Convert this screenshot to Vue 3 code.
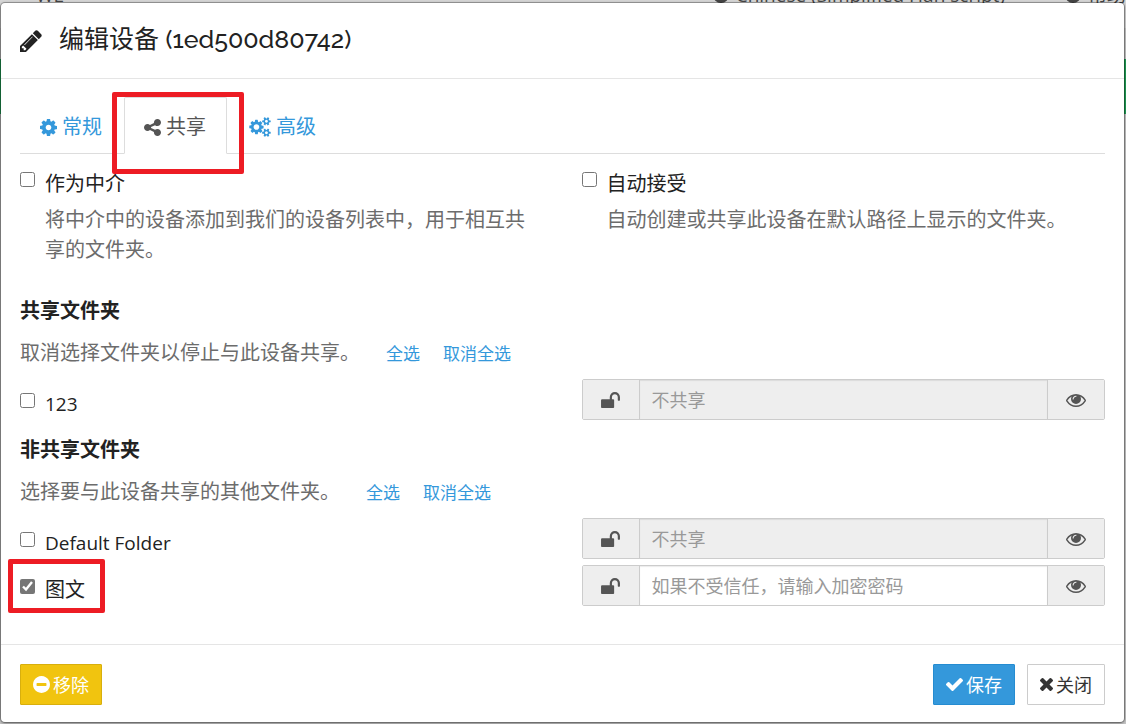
<script setup>
import { ref, h } from 'vue'

const icons = {
  pencil: ['128 128 1536 1536', 'M491 1536l91-91-235-235-91 91v107h128v128h107zm523-928q0-22-22-22-10 0-17 7l-542 542q-7 7-7 17 0 22 22 22 10 0 17-7l542-542q7-7 7-17zm-54-192l416 416-832 832h-416v-416zm683 96q0 53-37 90l-166 166-416-416 166-165q36-38 90-38 53 0 91 38l235 234q37 39 37 91z'],
  cog: ['128 128 1536 1536', 'M1152 896q0-106-75-181t-181-75-181 75-75 181 75 181 181 75 181-75 75-181zm512-109v222q0 12-8 23t-20 13l-185 28q-19 54-39 91 35 50 107 138 10 12 10 25t-9 23q-27 37-99 108t-94 71q-12 0-26-9l-138-108q-44 23-91 38-16 136-29 186-7 28-36 28h-222q-14 0-24.5-8.5t-11.5-21.5l-28-184q-49-16-90-37l-141 107q-10 9-25 9-14 0-25-11-126-114-165-168-7-10-7-23 0-12 8-23 15-21 51-66.500t54-70.500q-27-50-41-99l-183-27q-13-2-21-12.500t-8-23.500v-222q0-12 8-23t19-13l186-28q14-46 39-92-40-57-107-138-10-12-10-24 0-10 9-23 26-36 98.500-107.500t94.500-71.500q13 0 26 10l138 107q44-23 91-38 16-136 29-186 7-28 36-28h222q14 0 24.500 8.500t11.500 21.500l28 184q49 16 90 37l142-107q9-9 24-9 13 0 25 10 129 119 165 170 7 8 7 22 0 12-8 23-15 21-51 66.500t-54 70.500q26 50 41 98l183 28q13 2 21 12.500t8 23.500z'],
  cogs: ['-64 0 1920 1792', 'M832 896q0-106-75-181t-181-75-181 75-75 181 75 181 181 75 181-75 75-181zm768 512q0-52-38-90t-90-38-90 38-38 90q0 53 37.500 90.500t90.500 37.500 90.500-37.500 37.500-90.500zm0-1024q0-52-38-90t-90-38-90 38-38 90q0 53 37.500 90.500t90.500 37.500 90.500-37.500 37.500-90.500zm-384 421v185q0 10-7 19.500t-16 10.500l-155 24q-11 35-32 76 34 48 90 115 7 11 7 20 0 12-7 19-23 30-82.500 89.500t-78.500 59.500q-11 0-21-7l-115-90q-37 19-77 31-11 108-23 155-7 24-30 24h-186q-11 0-20-7.500t-10-17.500l-23-153q-34-10-75-31l-118 89q-7 7-20 7-11 0-21-8-144-133-144-160 0-9 7-19 10-14 41-53t47-61q-23-44-35-82l-152-24q-10-1-17-9.500t-7-19.500v-185q0-10 7-19.500t16-10.500l155-24q11-35 32-76-34-48-90-115-7-11-7-20 0-12 7-20 22-30 82-89t79-59q11 0 21 7l115 90q34-18 77-32 11-108 23-154 7-24 30-24h186q11 0 20 7.500t10 17.500l23 153q34 10 75 31l118-89q8-7 20-7 11 0 21 8 144 133 144 160 0 9-7 19-12 16-42 54t-45 60q23 48 34 82l152 23q10 2 17 10.500t7 19.500zm640 533v140q0 16-149 31-12 27-30 52 51 113 51 138 0 4-4 7-122 71-124 71-8 0-46-47t-52-68q-20 2-30 2t-30-2q-14 21-52 68t-46 47q-2 0-124-71-4-3-4-7 0-25 51-138-18-25-30-52-149-15-149-31v-140q0-16 149-31 13-29 30-52-51-113-51-138 0-4 4-7 4-2 35-20t59-34 30-16q8 0 46 46.500t52 67.500q20-2 30-2t30 2q51-71 92-112l6-2q4 0 124 70 4 3 4 7 0 25-51 138 17 23 30 52 149 15 149 31zm0-1024v140q0 16-149 31-12 27-30 52 51 113 51 138 0 4-4 7-122 71-124 71-8 0-46-47t-52-68q-20 2-30 2t-30-2q-14 21-52 68t-46 47q-2 0-124-71-4-3-4-7 0-25 51-138-18-25-30-52-149-15-149-31v-140q0-16 149-31 13-29 30-52-51-113-51-138 0-4 4-7 4-2 35-20t59-34 30-16q8 0 46 46.500t52 67.500q20-2 30-2t30 2q51-71 92-112l6-2q4 0 124 70 4 3 4 7 0 25-51 138 17 23 30 52 149 15 149 31z'],
  share: ['128 128 1536 1536', 'M1344 1024q133 0 226.500 93.500t93.500 226.500-93.500 226.500-226.500 93.500-226.500-93.500-93.500-226.500q0-12 2-34l-360-180q-92 86-218 86-133 0-226.500-93.500t-93.500-226.500 93.500-226.500 226.500-93.500q126 0 218 86l360-180q-2-22-2-34 0-133 93.500-226.500t226.500-93.500 226.500 93.500 93.500 226.500-93.500 226.500-226.500 93.500q-126 0-218-86l-360 180q2 22 2 34t-2 34l360 180q92-86 218-86z'],
  eye: ['0 384 1792 1152', 'M1664 960q-152-236-381-353 61 104 61 225 0 185-131.500 316.500t-316.500 131.500-316.500-131.500-131.500-316.500q0-121 61-225-229 117-381 353 133 205 333.500 326.500t434.500 121.500 434.500-121.500 333.500-326.500zm-720-384q0-20-14-34t-34-14q-125 0-214.500 89.500t-89.500 214.500q0 20 14 34t34 14 34-14 14-34q0-86 61-147t147-61q20 0 34-14t14-34zm848 384q0 34-20 69-140 230-376.500 368.500t-499.500 138.500-499.500-139-376.500-368q-20-35-20-69t20-69q140-229 376.500-368t499.500-139 499.500 139 376.500 368q20 35 20 69z'],
  unlock: ['64 128 1664 1408', 'M1728 576v256q0 26-19 45t-45 19h-64q-26 0-45-19t-19-45v-256q0-106-75-181t-181-75-181 75-75 181v192h96q40 0 68 28t28 68v576q0 40-28 68t-68 28h-960q-40 0-68-28t-28-68v-576q0-40 28-68t68-28h672v-192q0-185 131.500-316.500t316.500-131.500 316.500 131.500 131.500 316.500z'],
  minus: ['128 128 1536 1536', 'M1344 960v-128q0-26-19-45t-45-19h-768q-26 0-45 19t-19 45v128q0 26 19 45t45 19h768q26 0 45-19t19-45zm320-64q0 209-103 385.500t-279.500 279.500-385.500 103-385.500-103-279.500-279.500-103-385.500 103-385.500 279.500-279.500 385.500-103 385.500 103 279.500 279.500 103 385.500z'],
  check: ['121 334 1550 1188', 'M1671 566q0 40-28 68l-724 724-136 136q-28 28-68 28t-68-28l-136-136-362-362q-28-28-28-68t28-68l136-136q28-28 68-28t68 28l294 295 656-657q28-28 68-28t68 28l136 136q28 28 28 68z'],
  times: ['302 366 1188 1188', 'M1490 1322q0 40-28 68l-136 136q-28 28-68 28t-68-28l-294-294-294 294q-28 28-68 28t-68-28l-136-136q-28-28-28-68t28-68l294-294-294-294q-28-28-28-68t28-68l136-136q28-28 68-28t68 28l294 294 294-294q28-28 68-28t68 28l136 136q28 28 28 68t-28 68l-294 294 294 294q28 28 28 68z'],
}

const Icon = (props) =>
  h('svg', { viewBox: icons[props.name][0], fill: 'currentColor', 'aria-hidden': 'true' }, [
    h('path', { d: icons[props.name][1] }),
  ])
Icon.props = ['name']

const introducer = ref(false)
const autoAccept = ref(false)

const groups = ref([
  {
    title: '共享文件夹',
    help: '取消选择文件夹以停止与此设备共享。',
    folders: [{ id: 'f123', label: '123', selected: false, marked: false }],
  },
  {
    title: '非共享文件夹',
    help: '选择要与此设备共享的其他文件夹。',
    folders: [
      { id: 'default', label: 'Default Folder', selected: false, marked: false },
      { id: 'tuwen', label: '图文', selected: true, marked: true },
    ],
  },
])

const isLatin = (text) => /^[\x20-\x7e]+$/.test(text)

function setAll(group, value) {
  group.folders.forEach((f) => { f.selected = value })
}
</script>

<template>
  <div class="screen">
    <div class="page" aria-hidden="true">
      <div class="page-nav">
        <span>WE</span>
        <span class="lang"><i class="dot"></i>Chinese (Simplified Han script) <i class="caret"></i></span>
        <span class="help-menu"><i class="dot"></i>帮助</span>
      </div>
      <div class="page-banner"></div>
    </div>

    <section class="modal" role="dialog" aria-labelledby="dialog-title">
      <header class="modal-header">
        <Icon name="pencil" class="title-icon" />
        <h1 id="dialog-title">编辑设备 <span class="device">(1ed500d80742)</span></h1>
      </header>

      <div class="modal-body">
        <nav class="tabs">
          <a class="tab" href="#general"><Icon name="cog" class="icon" />常规</a>
          <a class="tab active" href="#sharing"><Icon name="share" class="icon" />共享<span class="mark mark-tab"></span></a>
          <a class="tab" href="#advanced"><Icon name="cogs" class="icon wide" />高级</a>
        </nav>

        <div class="columns options">
          <div>
            <div class="choice">
              <input id="introducer" v-model="introducer" type="checkbox">
              <label for="introducer">作为中介</label>
            </div>
            <p class="help indent">将中介中的设备添加到我们的设备列表中，用于相互共享的文件夹。</p>
          </div>
          <div>
            <div class="choice">
              <input id="auto-accept" v-model="autoAccept" type="checkbox">
              <label for="auto-accept">自动接受</label>
            </div>
            <p class="help indent">自动创建或共享此设备在默认路径上显示的文件夹。</p>
          </div>
        </div>

        <section v-for="group in groups" :key="group.title" class="group">
          <h2>{{ group.title }}</h2>
          <p class="help group-help">
            <span>{{ group.help }}</span>
            <a href="#all" @click.prevent="setAll(group, true)">全选</a>
            <a href="#none" @click.prevent="setAll(group, false)">取消全选</a>
          </p>
          <div class="folders">
            <div v-for="f in group.folders" :key="f.id" class="columns folder">
              <div class="choice">
                <input :id="f.id" v-model="f.selected" type="checkbox">
                <label :for="f.id" :class="{ latin: isLatin(f.label) }">{{ f.label }}</label>
                <span v-if="f.marked" class="mark mark-folder"></span>
              </div>
              <div class="input-group">
                <span class="addon"><Icon name="unlock" class="unlock" /></span>
                <input
                  type="password"
                  :aria-label="f.label"
                  :disabled="!f.selected"
                  :placeholder="f.selected ? '如果不受信任，请输入加密密码' : '不共享'"
                >
                <button type="button" class="addon" aria-label="显示密码"><Icon name="eye" class="eye" /></button>
              </div>
            </div>
          </div>
        </section>
      </div>

      <footer class="modal-footer">
        <button type="button" class="btn warning"><Icon name="minus" class="icon" />移除</button>
        <button type="button" class="btn primary"><Icon name="check" class="icon" />保存</button>
        <button type="button" class="btn plain"><Icon name="times" class="icon small" />关闭</button>
      </footer>
    </section>
  </div>
</template>

<style>
body {
  background: #d0d0d0;
}
</style>

<style scoped>
.screen {
  position: relative;
  box-sizing: border-box;
  min-height: 100vh;
  padding: 2px 1px 0 0;
  overflow: hidden;
  font-family: "Open Sans", "Noto Sans CJK SC", sans-serif;
  font-size: 20px;
  line-height: 30px;
  color: #222;
}
.page {
  position: absolute;
  inset: 0;
  background: #c8c8c8;
}
.page-nav {
  display: flex;
  height: 28px;
  margin-top: -19px;
  padding: 0 0 0 36px;
  border-bottom: 19px solid #d6d6d6;
  background: #d6d6d6;
  color: #444;
  font-size: 19px;
  line-height: 28px;
  white-space: nowrap;
}
.page-nav span {
  display: flex;
  align-items: center;
}
.page-nav .lang {
  margin-left: auto;
}
.page-nav .help-menu {
  margin-left: 40px;
}
.dot {
  width: 16px;
  height: 16px;
  margin-right: 7px;
  border-radius: 50%;
  background: #444;
}
.caret {
  margin-left: 10px;
  border: 5px solid transparent;
  border-top-color: #444;
  border-bottom: 0;
}
.page-banner {
  height: 55px;
  margin-top: 31px;
  background: #1fa055;
}
.modal {
  position: relative;
  border: 1px solid rgba(0, 0, 0, 0.25);
  border-radius: 5px;
  background: #fff;
  background-clip: padding-box;
  box-shadow: 0 1px 3px rgba(0, 0, 0, 0.3);
}
.modal-header {
  display: flex;
  align-items: center;
  gap: 17px;
  height: 75px;
  padding: 0 19px;
  border-bottom: 1px solid #e5e5e5;
}
.title-icon {
  width: 22px;
  height: 22px;
}
h1 {
  margin: 0;
  padding-bottom: 4px;
  font-size: 25px;
  font-weight: 400;
  line-height: 32px;
  font-family: Raleway, "Open Sans", "Noto Sans CJK SC", sans-serif;
}
.device {
  font-weight: 500;
}
.modal-body {
  padding: 18px 19px 38px;
}
.tabs {
  display: flex;
  gap: 2px;
  border-bottom: 1px solid #ddd;
}
.tab {
  position: relative;
  display: flex;
  align-items: center;
  gap: 5px;
  height: 52px;
  margin-bottom: -1px;
  padding: 3px 19px 0;
  border: 1px solid transparent;
  border-radius: 2px 2px 0 0;
  color: #3498db;
  text-decoration: none;
}
.tab.active {
  padding-right: 20px;
  border-color: #ddd;
  border-bottom-color: #fff;
  background: #fff;
  color: #555;
}
.icon {
  width: 17px;
  height: 17px;
}
.icon.wide {
  width: 22px;
  height: 20px;
}
.icon.small {
  width: 13px;
  height: 13px;
}
.mark {
  position: absolute;
  z-index: 1;
  border: 5px solid #ed1c24;
  border-radius: 2px;
  pointer-events: none;
}
.mark-tab {
  inset: -6px -18px -21px -13px;
}
.mark-folder {
  inset: -6px auto -7px -12px;
  width: 87px;
}
.columns {
  display: grid;
  grid-template-columns: 1fr 1fr;
  gap: 38px;
}
.options {
  padding-top: 15px;
}
.choice {
  position: relative;
  display: flex;
  align-items: flex-start;
  gap: 10px;
}
.choice input {
  flex: none;
  width: 15px;
  height: 15px;
  margin: 3px 0 0;
  accent-color: #767676;
}
.folder .choice {
  padding-top: 10px;
}
.folder .choice input {
  margin-top: 4px;
}
.folder .choice label {
  height: 30px;
}
.latin {
  font-size: 19px;
}
.help {
  margin: 6px 0 0;
  color: #6c6c6c;
}
.indent {
  padding-left: 25px;
}
h2 {
  margin: 15px 0 12px;
  font-size: 20px;
  font-weight: 700;
  line-height: 30px;
}
.options + .group h2 {
  margin-top: 31px;
}
.group-help {
  display: flex;
  align-items: baseline;
  margin: 0 0 11px;
}
.group-help a {
  margin-left: 23px;
  color: #3498db;
  font-size: 17px;
  line-height: 24px;
  text-decoration: none;
}
.group-help span + a {
  margin-left: 26px;
}
.folders {
  display: grid;
  gap: 6px;
}
.input-group {
  display: flex;
  height: 41px;
  box-sizing: border-box;
  border: 1px solid #ccc;
  border-radius: 2px;
}
.addon {
  display: flex;
  flex: none;
  align-items: center;
  justify-content: center;
  width: 56px;
  padding: 0;
  border: 0;
  background: #eee;
  color: #555;
}
.unlock {
  width: 19px;
  height: 16px;
}
.eye {
  width: 20px;
  height: 13px;
}
button.addon {
  padding-top: 2px;
}
.input-group input {
  flex: 1;
  min-width: 0;
  padding: 0 12px;
  border: 1px solid #ccc;
  border-width: 0 1px;
  background: #fff;
  box-shadow: inset 0 1px 1px rgba(0, 0, 0, 0.08);
  font: inherit;
  font-size: 18px;
}
.input-group input:disabled {
  background: #eee;
}
.input-group input::placeholder {
  color: #999;
  opacity: 1;
}
.modal-footer {
  display: flex;
  gap: 12px;
  padding: 19px 19px 17px;
  border-top: 1px solid #e5e5e5;
}
.btn {
  display: flex;
  align-items: center;
  gap: 3px;
  height: 41px;
  padding: 0 12px;
  border: 1px solid #ccc;
  border-radius: 1px;
  background: #fff;
  color: #333;
  font: inherit;
  font-size: 18px;
}
.btn.warning {
  margin-right: auto;
  border-color: #d8af0d;
  background: #f1c40f;
  color: #fff;
}
.btn.primary {
  border-color: #258cd1;
  background: #3498db;
  color: #fff;
}
</style>
